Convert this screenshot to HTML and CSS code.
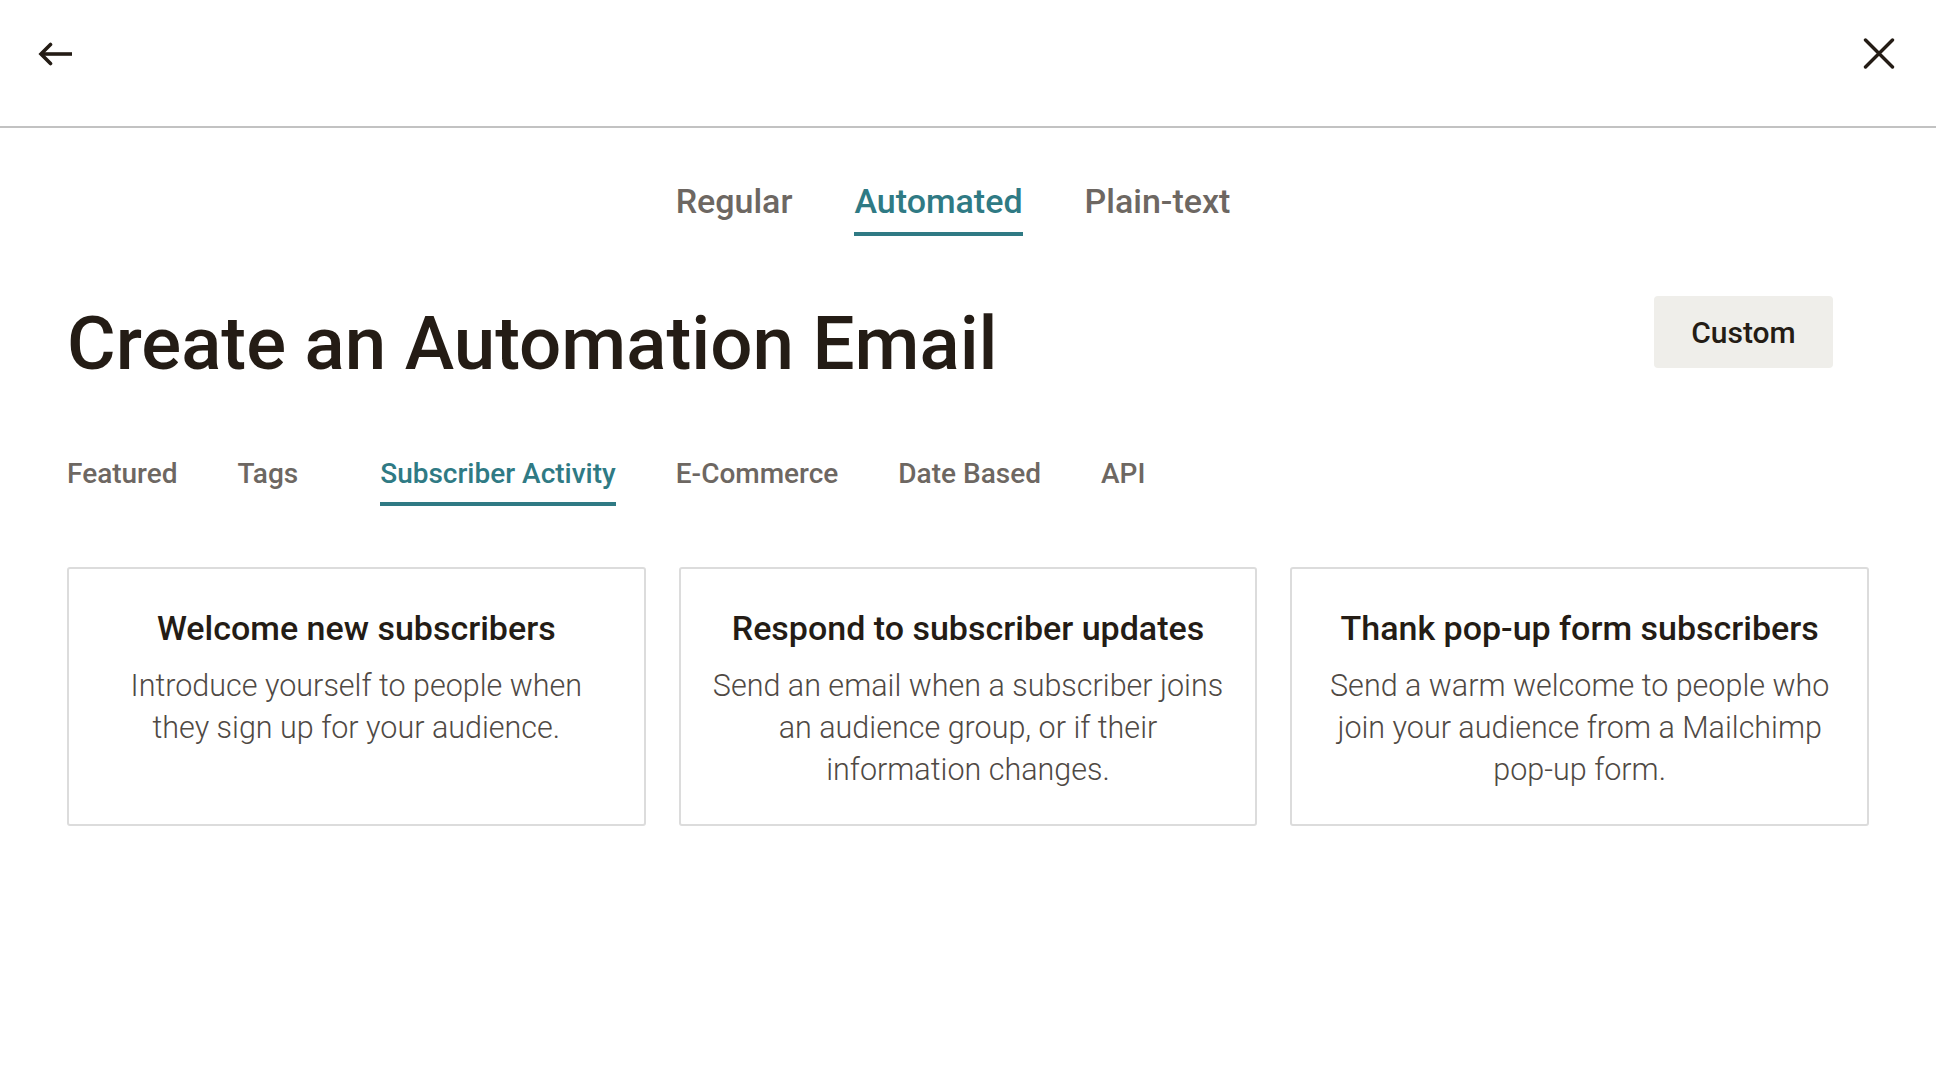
FILE: index.html
```html
<!DOCTYPE html>
<html lang="en">
<head>
<meta charset="utf-8">
<title>Create an Automation Email</title>
<link rel="stylesheet" href="styles.css">
</head>
<body>
<header class="topbar">
  <button class="icon-btn back" aria-label="Back">
    <svg width="36" height="24" viewBox="0 0 36 24"><path d="M34 12H3" fill="none" stroke="#241c15" stroke-width="3.6"/><path d="M12.5 2.5L3 12l9.5 9.5" fill="none" stroke="#241c15" stroke-width="3.6" stroke-linecap="round" stroke-linejoin="miter"/></svg>
  </button>
  <button class="icon-btn close" aria-label="Close">
    <svg width="32" height="32" viewBox="0 0 32 32"><path d="M2.5 3L29.5 30M29.5 3L2.5 30" fill="none" stroke="#241c15" stroke-width="3.4" stroke-linecap="round"/></svg>
  </button>
</header>
<main class="content">
  <nav class="type-tabs">
    <a class="type-tab">Regular</a>
    <a class="type-tab active">Automated</a>
    <a class="type-tab">Plain-text</a>
  </nav>
  <div class="title-row">
    <h1 class="page-title">Create an Automation Email</h1>
    <button class="custom-btn">Custom</button>
  </div>
  <nav class="cat-tabs">
    <a class="cat-tab">Featured</a>
    <a class="cat-tab tags">Tags</a>
    <a class="cat-tab active">Subscriber Activity</a>
    <a class="cat-tab">E-Commerce</a>
    <a class="cat-tab">Date Based</a>
    <a class="cat-tab">API</a>
  </nav>
  <section class="cards">
    <div class="card">
      <h2 class="card-title">Welcome new subscribers</h2>
      <p class="card-desc">Introduce yourself to people when<br>they sign up for your audience.</p>
    </div>
    <div class="card">
      <h2 class="card-title">Respond to subscriber updates</h2>
      <p class="card-desc">Send an email when a subscriber joins<br>an audience group, or if their<br>information changes.</p>
    </div>
    <div class="card">
      <h2 class="card-title">Thank pop-up form subscribers</h2>
      <p class="card-desc">Send a warm welcome to people who<br>join your audience from a Mailchimp<br>pop-up form.</p>
    </div>
  </section>
</main>
</body>
</html>
```
FILE: styles.css
```css
* { box-sizing: border-box; }
html, body { margin: 0; padding: 0; background: #fff; }
body {
  font-family: Roboto, "Liberation Sans", Arial, sans-serif;
  color: #241c15;
  width: 1936px;
}
.topbar {
  height: 128px;
  border-bottom: 2px solid #c2c2c2;
  display: flex;
  justify-content: space-between;
  align-items: flex-start;
  padding: 37px 41px 0 38px;
}
.icon-btn {
  border: 0;
  background: none;
  padding: 0;
  margin: 0;
  display: block;
  cursor: pointer;
}
.icon-btn svg { display: block; }
.back { margin-top: 5px; }
.content { padding: 0 67px; }
.type-tabs {
  display: flex;
  justify-content: center;
  gap: 62px;
  margin-top: 53px;
  padding-right: 30px;
}
.type-tab {
  font-size: 34px;
  line-height: 40px;
  font-weight: 500;
  color: #6d6762;
  padding-bottom: 11px;
  border-bottom: 4px solid transparent;
}
.type-tab.active {
  color: #2f7a84;
  border-bottom-color: #2f7a84;
}
.title-row {
  display: flex;
  justify-content: space-between;
  align-items: flex-start;
  margin-top: 60px;
  padding-right: 36px;
}
.page-title {
  margin: 4px 0 0;
  font-size: 74.5px;
  line-height: 88px;
  font-weight: 500;
  letter-spacing: 0;
  color: #241c15;
}
.custom-btn {
  height: 72px;
  width: 179px;
  border: 0;
  border-radius: 4px;
  background: #efeeea;
  font-family: Roboto, "Liberation Sans", Arial, sans-serif;
  font-size: 30px;
  font-weight: 500;
  color: #241c15;
  display: flex;
  align-items: center;
  justify-content: center;
  padding: 0;
}
.cat-tabs {
  display: flex;
  gap: 60px;
  margin-top: 69px;
}
.cat-tab {
  font-size: 28px;
  line-height: 34px;
  font-weight: 500;
  color: #6d6762;
  padding-bottom: 11px;
  border-bottom: 4px solid transparent;
}
.cat-tab.tags { margin-right: 22px; }
.cat-tab.active {
  color: #2f7a84;
  border-bottom-color: #2f7a84;
}
.cards {
  display: grid;
  grid-template-columns: repeat(3, 1fr);
  gap: 33px;
  margin-top: 61px;
}
.card {
  border: 2px solid #dcdcdc;
  border-radius: 3px;
  padding: 39px 16px 33px;
  text-align: center;
}
.card-title {
  margin: 0;
  font-size: 34px;
  line-height: 40px;
  font-weight: 500;
  color: #241c15;
}
.card-desc {
  margin: 17px 0 0;
  font-size: 30.5px;
  line-height: 42px;
  font-weight: 300;
  color: #4f4944;
  white-space: nowrap;
}
```
